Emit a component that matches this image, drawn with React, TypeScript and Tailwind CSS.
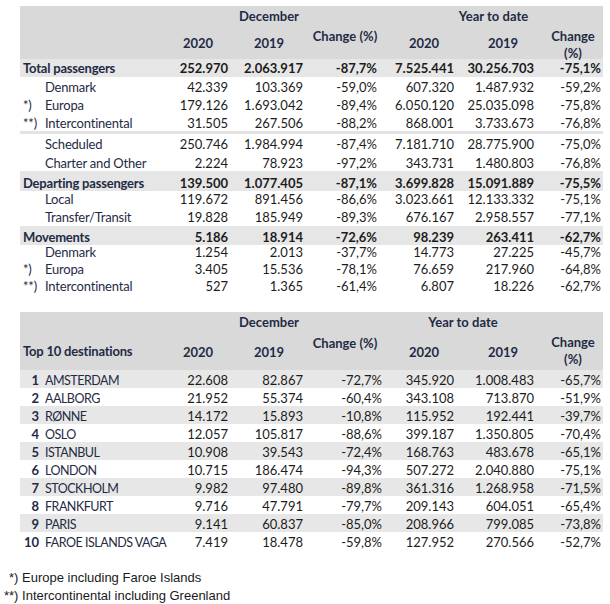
import React from "react";

const GRID = "grid grid-cols-[140px_70px_75px_79px_72px_80px_67px]";
const NUM = "#1c1c1c";
const LBL = "#1f2b45";

type Row =
  | { kind: "bold" | "sub"; label: string; prefix?: string; v: string[]; h: number; t: number; lh?: number }
  | { kind: "sep" };

const t1: Row[] = [
  { kind: "bold", label: "Total passengers", v: ["252.970", "2.063.917", "-87,7%", "7.525.441", "30.256.703", "-75,1%"], h: 18, t: 1 },
  { kind: "sub", label: "Denmark", v: ["42.339", "103.369", "-59,0%", "607.320", "1.487.932", "-59,2%"], h: 18, t: 2 },
  { kind: "sub", prefix: "*)", label: "Europa", v: ["179.126", "1.693.042", "-89,4%", "6.050.120", "25.035.098", "-75,8%"], h: 18, t: 2 },
  { kind: "sub", prefix: "**)", label: "Intercontinental", v: ["31.505", "267.506", "-88,2%", "868.001", "3.733.673", "-76,8%"], h: 18, t: 2 },
  { kind: "sep" },
  { kind: "sub", label: "Scheduled", v: ["250.746", "1.984.994", "-87,4%", "7.181.710", "28.775.900", "-75,0%"], h: 18, t: 2 },
  { kind: "sub", label: "Charter and Other", v: ["2.224", "78.923", "-97,2%", "343.731", "1.480.803", "-76,8%"], h: 19, t: 3 },
  { kind: "bold", label: "Departing passengers", v: ["139.500", "1.077.405", "-87,1%", "3.699.828", "15.091.889", "-75,5%"], h: 20, t: 4 },
  { kind: "sub", label: "Local", v: ["119.672", "891.456", "-86,6%", "3.023.661", "12.133.332", "-75,1%"], h: 17, t: 0 },
  { kind: "sub", label: "Transfer/Transit", v: ["19.828", "185.949", "-89,3%", "676.167", "2.958.557", "-77,1%"], h: 18, t: 1 },
  { kind: "bold", label: "Movements", v: ["5.186", "18.914", "-72,6%", "98.239", "263.411", "-62,7%"], h: 19, t: 3 },
  { kind: "sub", label: "Denmark", v: ["1.254", "2.013", "-37,7%", "14.773", "27.225", "-45,7%"], h: 16, t: 0, lh: 14 },
  { kind: "sub", prefix: "*)", label: "Europa", v: ["3.405", "15.536", "-78,1%", "76.659", "217.960", "-64,8%"], h: 17, t: 0 },
  { kind: "sub", prefix: "**)", label: "Intercontinental", v: ["527", "1.365", "-61,4%", "6.807", "18.226", "-62,7%"], h: 17, t: 0 },
];

const t2: [string, string, string[]][] = [
  ["1", "AMSTERDAM", ["22.608", "82.867", "-72,7%", "345.920", "1.008.483", "-65,7%"]],
  ["2", "AALBORG", ["21.952", "55.374", "-60,4%", "343.108", "713.870", "-51,9%"]],
  ["3", "RØNNE", ["14.172", "15.893", "-10,8%", "115.952", "192.441", "-39,7%"]],
  ["4", "OSLO", ["12.057", "105.817", "-88,6%", "399.187", "1.350.805", "-70,4%"]],
  ["5", "ISTANBUL", ["10.908", "39.543", "-72,4%", "168.763", "483.678", "-65,1%"]],
  ["6", "LONDON", ["10.715", "186.474", "-94,3%", "507.272", "2.040.880", "-75,1%"]],
  ["7", "STOCKHOLM", ["9.982", "97.480", "-89,8%", "361.316", "1.268.958", "-71,5%"]],
  ["8", "FRANKFURT", ["9.716", "47.791", "-79,7%", "209.143", "604.051", "-65,4%"]],
  ["9", "PARIS", ["9.141", "60.837", "-85,0%", "208.966", "799.085", "-73,8%"]],
  ["10", "FAROE ISLANDS VAGA", ["7.419", "18.478", "-59,8%", "127.952", "270.566", "-52,7%"]],
];

const numPad = ["pr-[2px]", "pr-[2px]", "pr-[7px]", "pr-[2px]", "pr-[2px]", "pr-[2px]"];
const numPad2 = ["pr-[2px]", "pr-[2px]", "pr-[2px]", "pr-[2px]", "pr-[2px]", "pr-[2px]"];

function Header({ second }: { second: boolean }) {
  return (
    <div className="bg-[#d9d9d9] font-bold" style={{ color: LBL }}>
      <div className={`${GRID} h-[22px] leading-[16px]`}>
        <div />
        <div className="col-span-3 text-center pr-[6px] pt-[2px]">December</div>
        {second ? (
          <div className="col-span-2 text-center pl-[6px] pt-[2px]">Year to date</div>
        ) : (
          <div className="col-span-3 text-center pt-[2px]">Year to date</div>
        )}
        {second && <div />}
      </div>
      <div className={`${GRID} ${second ? "h-[36px]" : "h-[31px]"} leading-[16px]`}>
        <div className={`pl-[3px] tracking-[-0.2px] ${second ? "pt-[9px]" : ""}`}>{second ? "Top 10 destinations" : ""}</div>
        <div className={`text-center pl-[6px] ${second ? "pt-[10px]" : "pt-[7px]"}`}>2020</div>
        <div className={`text-center pl-[3px] ${second ? "pt-[10px]" : "pt-[7px]"}`}>2019</div>
        <div className={`text-center pl-[1px] ${second ? "pt-[1px]" : "pt-0"}`}>Change (%)</div>
        <div className={`text-center pl-[8px] ${second ? "pt-[10px]" : "pt-[7px]"}`}>2020</div>
        <div className={`text-center pl-[14px] ${second ? "pt-[10px]" : "pt-[7px]"}`}>2019</div>
        <div className="text-center pl-[7px] leading-[17px] pt-0">
          Change
          <br />
          (%)
        </div>
      </div>
    </div>
  );
}

function Table1() {
  return (
    <div className="w-[583px]">
      <Header second={false} />
      {t1.map((r, i) => {
        if (r.kind === "sep") return <div key={i} className="h-[3px] bg-[#e3e3e3]" />;
        const bold = r.kind === "bold";
        return (
          <div
            key={i}
            className={`${GRID} items-start ${bold ? "bg-[#e6e6e6] font-bold" : ""}`}
            style={{ height: r.h, lineHeight: `${r.lh ?? 16}px` }}
          >
            <div className="flex pl-[3px] tracking-[-0.2px]" style={{ paddingTop: r.t, color: LBL }}>
              {bold ? (
                <span className="whitespace-nowrap">{r.label}</span>
              ) : (
                <>
                  <span className="w-[22px] shrink-0 whitespace-nowrap">{r.prefix ?? ""}</span>
                  <span className="whitespace-nowrap">{r.label}</span>
                </>
              )}
            </div>
            {r.v.map((v, j) => (
              <div key={j} className={`text-right whitespace-nowrap ${numPad[j]}`} style={{ paddingTop: r.t, color: NUM }}>
                {v}
              </div>
            ))}
          </div>
        );
      })}
    </div>
  );
}

function Table2() {
  return (
    <div className="w-[583px]">
      <Header second />
      {t2.map(([n, name, v], i) => (
        <div
          key={i}
          className={`${GRID} h-[18px] items-start leading-[16px] ${i % 2 === 0 ? "bg-[#e7e7e7]" : ""}`}
        >
          <div className="flex items-baseline pl-[3px] pt-[2px]" style={{ color: LBL }}>
            <span className="w-[16px] shrink-0 text-right font-bold">{n}</span>
            <span className="ml-[6px] whitespace-nowrap text-[12.5px] tracking-[-0.5px]">{name}</span>
          </div>
          {v.map((x, j) => (
            <div key={j} className={`text-right whitespace-nowrap pt-[2px] ${numPad2[j]}`} style={{ color: NUM }}>
              {x}
            </div>
          ))}
        </div>
      ))}
    </div>
  );
}

export default function App() {
  return (
    <div className="w-[610px] h-[604px] bg-white overflow-hidden">
      <div className="pl-[20px] pt-[6px] text-[13px]" style={{ fontFamily: "Lato, 'Open Sans', sans-serif" }}>
        <Table1 />
        <div className="h-[17px]" />
        <Table2 />
      </div>
      <div
        className="mt-[19px] text-[13px] leading-[18px] text-[#1a1a1a]"
        style={{ fontFamily: "'Liberation Sans', Arial, sans-serif" }}
      >
        <div className="pl-[9px]">*) Europe including Faroe Islands</div>
        <div className="pl-[4px]">**) Intercontinental including Greenland</div>
      </div>
    </div>
  );
}
